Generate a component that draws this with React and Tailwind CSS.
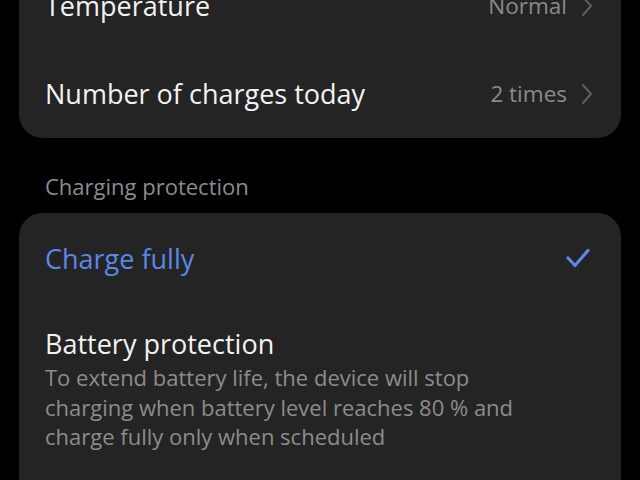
function Chevron() {
  return (
    <svg width="14" height="22" viewBox="0 0 14 22" fill="none" className="ml-[13px]">
      <path d="M3 2 L11 11 L3 20" stroke="#5f5f5f" strokeWidth="2" strokeLinecap="round" strokeLinejoin="round" />
    </svg>
  );
}

function Check() {
  return (
    <svg width="26" height="22" viewBox="0 0 26 22" fill="none" className="-mt-[3px]">
      <path d="M3 11 L10 18.5 L23 3.5" stroke="#5b87e6" strokeWidth="3.2" strokeLinecap="round" strokeLinejoin="round" />
    </svg>
  );
}

function InfoRow({ label, value }) {
  return (
    <div className="h-[88px] flex items-center justify-between pl-[26px] pr-[27px]">
      <span className="text-[27px] leading-[34px] text-[#f2f2f2]">{label}</span>
      <div className="flex items-center">
        <span className="text-[22.5px] leading-[28px] text-[#8a8a8a]">{value}</span>
        <Chevron />
      </div>
    </div>
  );
}

export default function App() {
  return (
    <div className="min-h-screen bg-black overflow-hidden font-['Open_Sans',sans-serif]">
      <div className="mx-[19px] -mt-[38px] bg-[#242424] rounded-[24px]">
        <InfoRow label="Temperature" value="Normal" />
        <InfoRow label="Number of charges today" value="2 times" />
      </div>

      <div className="px-[45px] mt-[33px] mb-[12px] text-[22px] leading-[30px] text-[#8c8c8c]">
        Charging protection
      </div>

      <div className="mx-[19px] bg-[#242424] rounded-t-[24px] pb-10">
        <div className="h-[92px] flex items-center justify-between pl-[26px] pr-[30px]">
          <span className="text-[27px] leading-[34px] text-[#5b87e6]">Charge fully</span>
          <Check />
        </div>
        <div className="pt-[23px] pl-[26px] pr-[27px]">
          <div className="text-[27px] leading-[32px] text-[#f2f2f2]">Battery protection</div>
          <p className="mt-[3px] text-[22px] leading-[29.5px] text-[#8c8c8c] max-w-[495px]">
            To extend battery life, the device will stop charging when battery level reaches 80 % and charge fully only when scheduled
          </p>
        </div>
      </div>
    </div>
  );
}
